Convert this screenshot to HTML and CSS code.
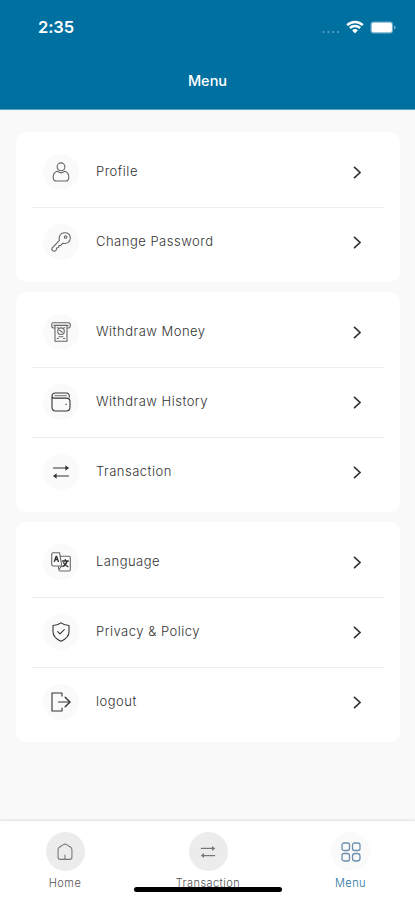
FILE: index.html
```html
<!DOCTYPE html>
<html lang="en">
<head>
<meta charset="utf-8">
<meta name="viewport" content="width=device-width, initial-scale=1">
<title>Menu</title>
<link rel="stylesheet" href="styles.css">
</head>
<body>
<div class="screen">
  <header class="header">
    <div class="status">
      <span class="time">2:35</span>
      <span class="status-icons">
        <svg class="dots" width="18" height="4" viewBox="0 0 18 4"><circle cx="1.7" cy="2" r="1.1"/><circle cx="6.4" cy="2" r="1.1"/><circle cx="11.2" cy="2" r="1.1"/><circle cx="16" cy="2" r="1.1"/></svg>
        <svg class="wifi" width="18" height="14" viewBox="0 0 18 14"><path d="M1.2 5.1a11.2 11.2 0 0 1 15.6 0M3.9 8a7.3 7.3 0 0 1 10.2 0"/><path class="fill" d="M6.1 10.3a4.2 4.2 0 0 1 5.8 0L9 13.4z"/></svg>
        <svg class="battery" width="26" height="13" viewBox="0 0 26 13"><rect class="shell" x=".5" y=".5" width="22.5" height="12" rx="3"/><rect class="charge" x="1.7" y="1.7" width="20.2" height="9.6" rx="1.8"/><path class="tip" d="M24 4.4q1.7.5 1.7 2.1T24 8.6z"/></svg>
      </span>
    </div>
    <h1 class="title">Menu</h1>
  </header>

  <main class="content">
    <section class="card">
      <div class="row">
        <span class="badge"><svg class="icon" viewBox="0 0 20 20"><circle cx="10" cy="4.800" r="3.900"/><path d="M6.2 9.200C3.300 10 2.200 12.700 2.200 15.400q0 3.600 3.200 3.600h9.200q3.200 0 3.200-3.600c0-2.700-1.100-5.400-4-6.200M6.200 9.200q3.800 3.300 7.600 0"/></svg></span>
        <span class="label">Profile</span>
        <svg class="chevron" viewBox="0 0 8 13"><path d="M1 .8l6 5.700-6 5.700"/></svg>
      </div>
      <div class="row">
        <span class="badge"><svg class="icon" viewBox="0 0 20 20"><path d="M8.400 8.400C7.400 3.500 10 .7 13.600.7c3.400 0 5.700 2.200 5.700 5.400 0 3.700-2.900 6.100-7.500 5.100l-2 2.200-1.800.2-.3 1.900-1.900.3-.3 1.900-1.300 1.200q-1.300.7-2.500-.3-1.400-1-.6-2.500z"/><circle cx="14.600" cy="5" r="1.300"/></svg></span>
        <span class="label">Change Password</span>
        <svg class="chevron" viewBox="0 0 8 13"><path d="M1 .8l6 5.700-6 5.700"/></svg>
      </div>
    </section>

    <section class="card">
      <div class="row">
        <span class="badge"><svg class="icon" viewBox="0 0 20 20"><path d="M4 6H2.300Q.7 6 .7 3.300T2.300.8h15.400q1.600 0 1.600 2.500T17.700 6H16M3 3.400h14M4 3.400v15.800h12V3.400"/><circle cx="10" cy="9.200" r="3.300"/><path d="M6.200 5.700h1M12.800 5.700h1M8.700 8.200l2.600 2M6.200 16.500h1.200M12.600 16.500h1.200M8 14.800h4"/></svg></span>
        <span class="label">Withdraw Money</span>
        <svg class="chevron" viewBox="0 0 8 13"><path d="M1 .8l6 5.700-6 5.700"/></svg>
      </div>
      <div class="row">
        <span class="badge"><svg class="icon dark" viewBox="0 0 20 20"><path d="M1 4.500v10.800Q1 19 4.600 19h10.800q3.600 0 3.600-3.700V9.600q0-3.500-3.600-3.500H3.200Q1 6.100 1 4.200 1 1 4.400 1h10.800Q18.400 1 18.400 5"/><path class="faint" d="M4 3.600h11.500M14.500 12.400h1"/></svg></span>
        <span class="label">Withdraw History</span>
        <svg class="chevron" viewBox="0 0 8 13"><path d="M1 .8l6 5.700-6 5.700"/></svg>
      </div>
      <div class="row">
        <span class="badge"><svg class="icon dark" viewBox="0 0 20 20"><path d="M2.500 6h14.700M17.500 14H3"/><path class="solid" d="M14.400 3.200L17.800 6l-3.400 2.800zM5.600 11.200L2.200 14l3.400 2.800z"/></svg></span>
        <span class="label">Transaction</span>
        <svg class="chevron" viewBox="0 0 8 13"><path d="M1 .8l6 5.700-6 5.700"/></svg>
      </div>
    </section>

    <section class="card">
      <div class="row">
        <span class="badge"><svg class="icon" viewBox="0 0 20 20"><path d="M2.100.8h6.500L10.800 14H2.100Q.7 14 .7 12.600V2.200Q.7.8 2.100.8zM9.200 4.300h8.700q1.400 0 1.400 1.400v11.900q0 1.400-1.400 1.400H9.300q-1.200 0-1.500-1.500L7.300 14M10.800 14l-2.500 3"/><path class="bold" d="M3.400 9.400l1.700-5h.5l1.800 5M4 7.600h2.800M11.500 9h5.800M14.300 7.600V9M16 9q-.7 3.700-4.200 5.500M12.500 10.800q1.400 2.700 4.300 3.700"/></svg></span>
        <span class="label">Language</span>
        <svg class="chevron" viewBox="0 0 8 13"><path d="M1 .8l6 5.700-6 5.700"/></svg>
      </div>
      <div class="row">
        <span class="badge"><svg class="icon dark" viewBox="0 0 20 20"><path d="M10 .9Q13.400 3.500 18 3.500v6.300q0 6.100-8 9.400-8-3.300-8-9.400V3.500Q6.600 3.500 10 .9zM6.700 9.700l2.300 2.200 4.300-4.200"/></svg></span>
        <span class="label">Privacy &amp; Policy</span>
        <svg class="chevron" viewBox="0 0 8 13"><path d="M1 .8l6 5.700-6 5.700"/></svg>
      </div>
      <div class="row">
        <span class="badge"><svg class="icon dark" viewBox="0 0 20 20"><path d="M11 4V1H1v18h10v-3M7.500 10h11.300"/><path class="bold" d="M14.200 5.300L19 10l-4.800 4.700"/></svg></span>
        <span class="label">logout</span>
        <svg class="chevron" viewBox="0 0 8 13"><path d="M1 .8l6 5.700-6 5.700"/></svg>
      </div>
    </section>
  </main>

  <nav class="tabs">
    <div class="tab">
      <span class="tab-badge"><svg class="tab-icon" viewBox="0 0 20 20"><path d="M2.300 7.200Q2.300 5.600 3.700 4.700L8.300 1.800q1.700-1 3.400 0l4.600 2.900q1.400.9 1.400 2.500v8.500q0 2.500-2.500 2.500H4.800q-2.500 0-2.500-2.500zM10 13.500v4.500"/></svg></span>
      <span class="tab-label">Home</span>
    </div>
    <div class="tab">
      <span class="tab-badge"><svg class="tab-icon" viewBox="0 0 20 20"><path d="M2.500 6h14.700M17.500 14H3"/><path class="solid" d="M14.400 3.200L17.800 6l-3.400 2.800zM5.600 11.200L2.200 14l3.400 2.800z"/></svg></span>
      <span class="tab-label">Transaction</span>
    </div>
    <div class="tab active">
      <span class="tab-badge"><svg class="tab-icon" viewBox="0 0 20 20"><rect x="1" y="1" width="7.500" height="7.500" rx="2"/><rect x="11.500" y="1" width="7.500" height="7.500" rx="2"/><rect x="1" y="11.500" width="7.500" height="7.500" rx="2"/><rect x="11.500" y="11.500" width="7.500" height="7.500" rx="2.800"/></svg></span>
      <span class="tab-label">Menu</span>
    </div>
    <span class="home-indicator"></span>
  </nav>
</div>
</body>
</html>
```
FILE: styles.css
```css
* { box-sizing: border-box; }
body { margin: 0; font-family: Inter, "Liberation Sans", sans-serif; }
svg { display: block; fill: none; flex: none; }

.screen { display: flex; flex-direction: column; height: 900px; background: #f9f9f9; overflow: hidden; }

.header { height: 110px; background: #0070a0; border-bottom: 1px solid #5c9fbf; color: #fff; flex: none; }
.status { display: flex; justify-content: space-between; align-items: center; height: 54px; padding: 0 19px 0 38px; }
.time { font-size: 16.5px; font-weight: 600; line-height: 20px; letter-spacing: -.1px; }
.status-icons { display: flex; align-items: center; }
.dots { fill: #5d9fc0; margin: 9px 6px 0 0; }
.wifi { margin-right: 6px; stroke: #fff; stroke-width: 2.500; }
.wifi .fill { fill: #fff; stroke: none; }
.shell { fill: #72aeca; }
.charge { fill: #fff; }
.tip { fill: #72aeca; }
.title { margin: 17px 0 0; font-size: 14.500px; font-weight: 500; line-height: 20px; text-align: center; }

.content { display: flex; flex-direction: column; gap: 10px; padding: 22px 15px 0 16px; flex: 1; }
.card { background: #fff; border-radius: 10px; padding: 5px 16px; }
.row { display: flex; align-items: center; height: 70px; padding: 0 23px 0 11px; }
.row + .row { box-shadow: inset 0 1px 0 #ececec; }
.badge { display: flex; align-items: center; justify-content: center; width: 36px; height: 36px; border-radius: 50%; background: #fafafa; margin-right: 17px; }
.icon { width: 20px; height: 20px; stroke: #666; stroke-width: 1.100; stroke-linecap: round; stroke-linejoin: round; }
.icon.dark { stroke: #333; }
.icon .faint { stroke: #888; }
.icon .bold { stroke: #333; stroke-width: 1.400; }
.icon .solid { fill: #333; stroke: none; }
.label { flex: 1; padding-bottom: 2px; font-size: 13px; font-weight: 300; letter-spacing: .5px; line-height: 20px; color: #333; }
.chevron { width: 8px; height: 13px; stroke: #333; stroke-width: 1.600; }

.tabs { position: relative; display: grid; grid-template-columns: 130px 156px 129px; height: 79px; padding-top: 11px; background: #fff; box-shadow: 0 -1px 2px #ddd; }
.tab { display: flex; flex-direction: column; align-items: center; color: #555; }
.tab-badge { display: flex; align-items: center; justify-content: center; width: 39px; height: 39px; border-radius: 50%; background: #ececec; }
.tab-icon { width: 18px; height: 18px; stroke: #777; stroke-width: 1.200; stroke-linecap: round; stroke-linejoin: round; }
.tab-icon .solid { fill: #777; stroke: none; }
.tab-label { margin-top: 4px; font-size: 11px; font-weight: 300; line-height: 16px; letter-spacing: .45px; }
.active { color: #1b71a0; }
.active .tab-badge { background: #fafafa; }
.active .tab-icon { width: 20px; height: 20px; stroke: #6c8fae; stroke-width: 1.300; }
.home-indicator { position: absolute; left: 134px; top: 66px; width: 148px; height: 5px; border-radius: 3px; background: #000; }
```
